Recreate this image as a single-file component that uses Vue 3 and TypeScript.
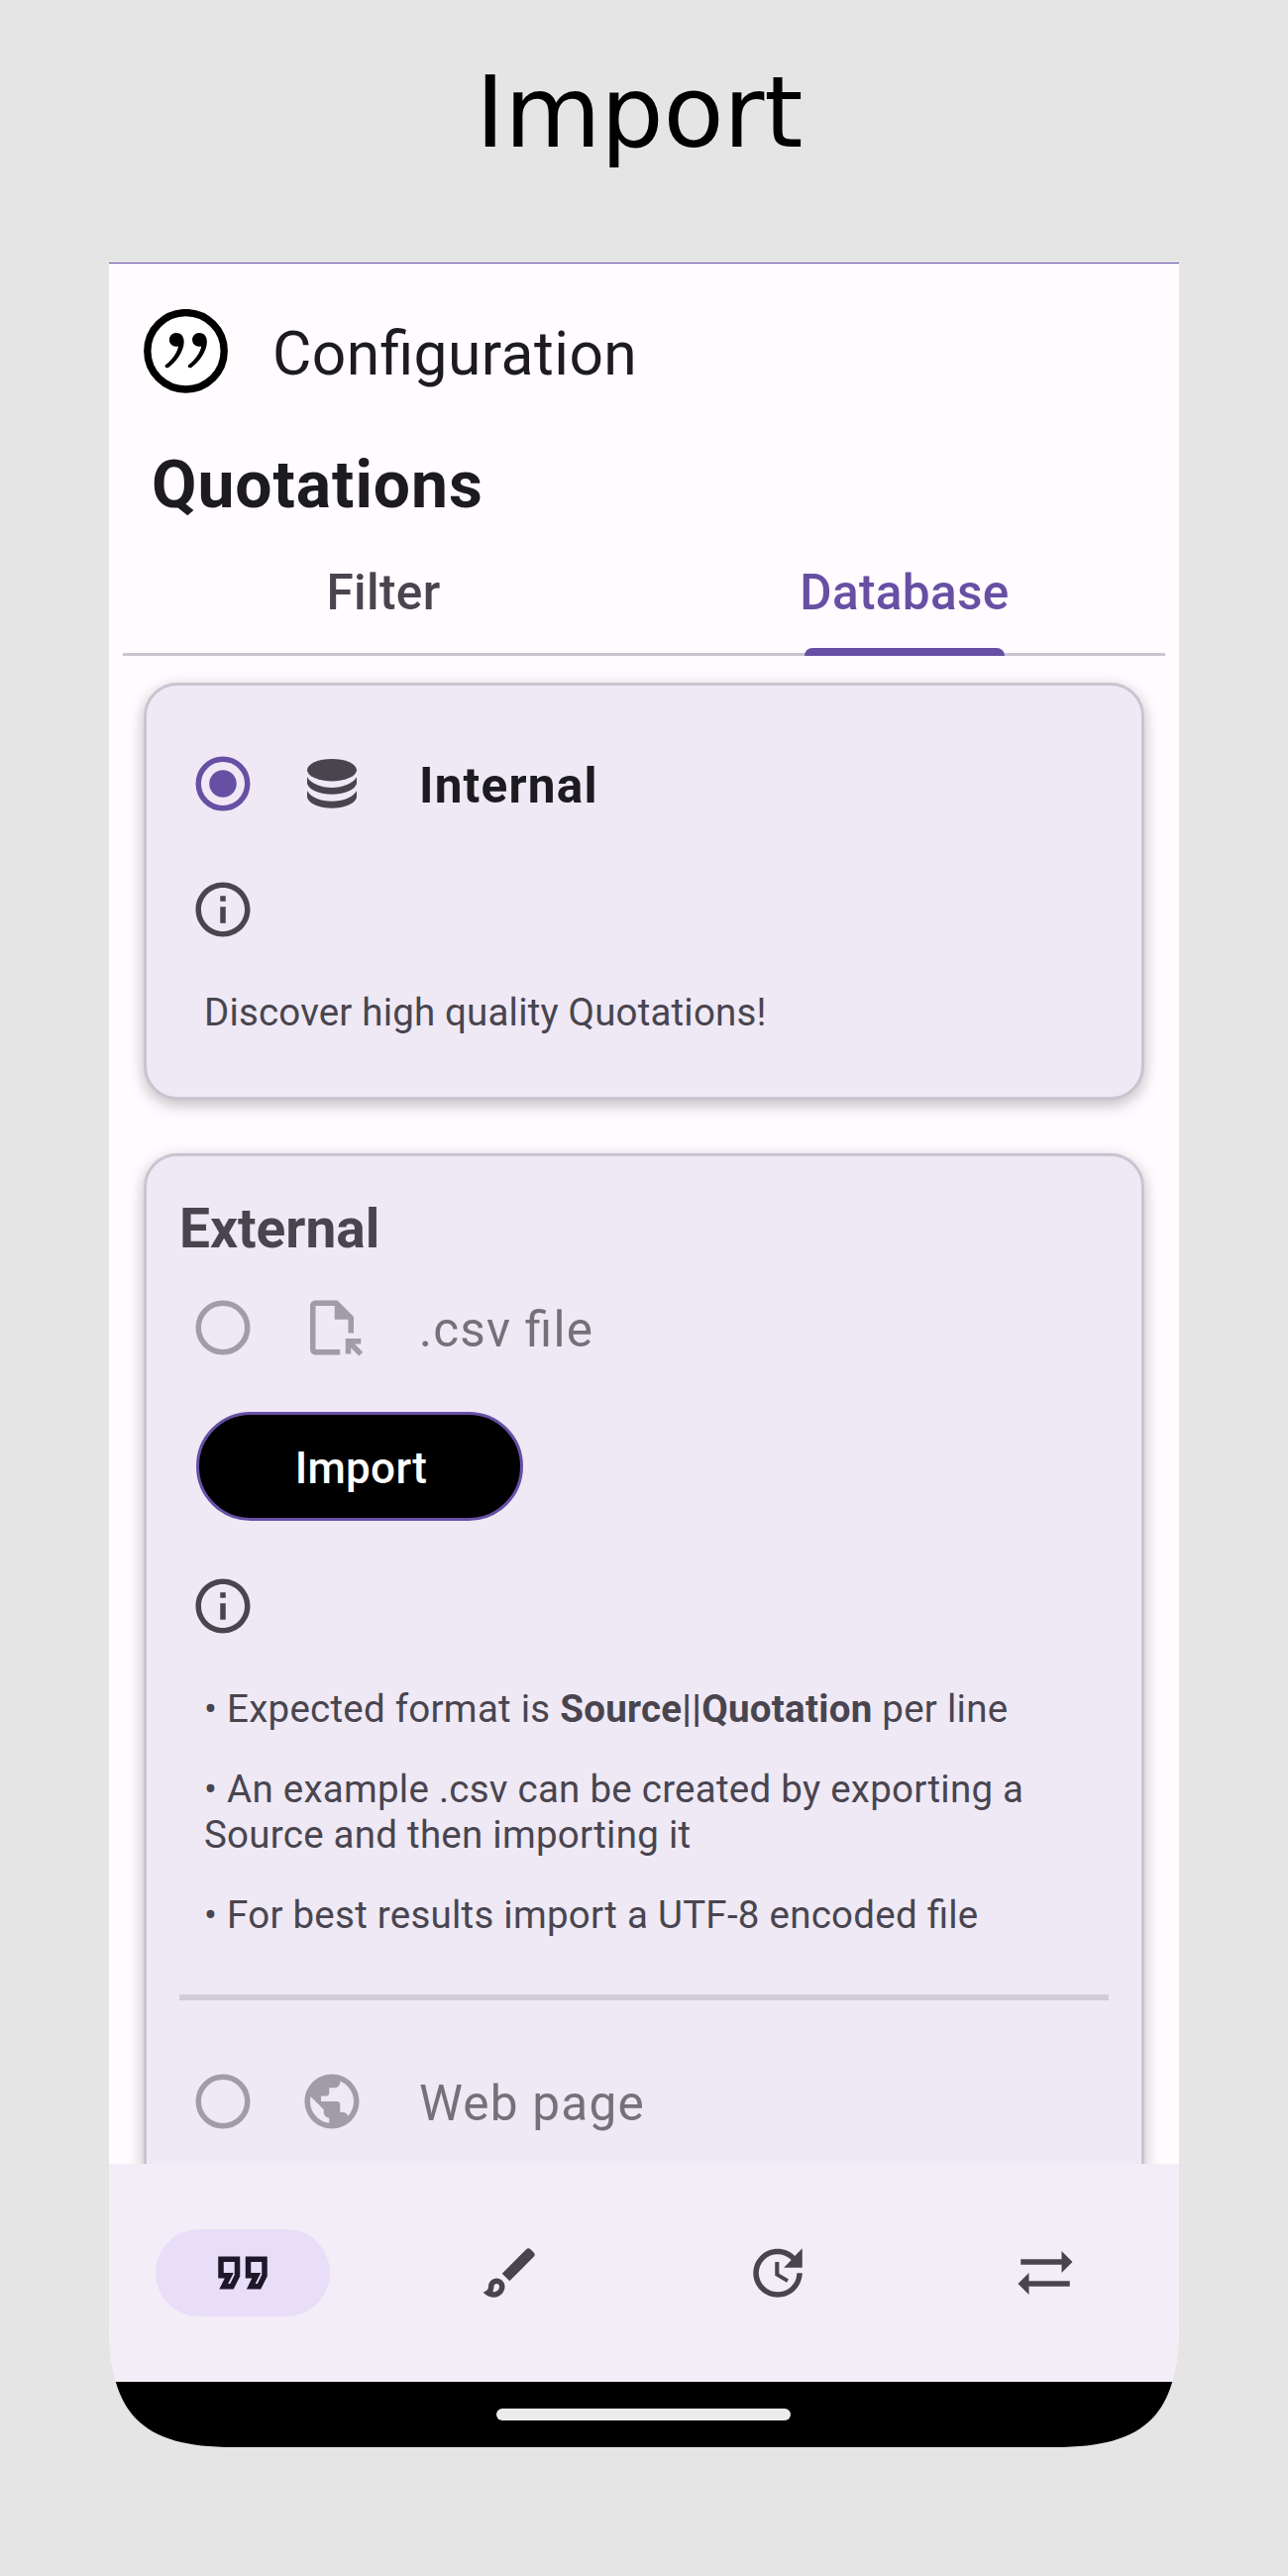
<script setup lang="ts">
interface NavItem {
  name: string
  active: boolean
  path: string
}

const infoPath =
  'M11 7h2v2h-2zm0 4h2v6h-2zm1-9C6.48 2 2 6.48 2 12s4.48 10 10 10 10-4.48 10-10S17.52 2 12 2zm0 18c-4.41 0-8-3.59-8-8s3.59-8 8-8 8 3.59 8 8-3.59 8-8 8z'

const filePath =
  'M15 22H6c-1.1 0-2-.9-2-2V4c0-1.1.9-2 2-2h8l6 6v6h-2V9h-5V4H6v16h9v2zM19 21.66v-2.24l2.95 2.95 1.41-1.41L20.41 18h2.24v-2H17v5.66h2z'

const globePath =
  'M12 2C6.48 2 2 6.48 2 12s4.48 10 10 10 10-4.48 10-10S17.52 2 12 2zm-1 17.93c-3.95-.49-7-3.85-7-7.93 0-.62.08-1.21.21-1.79L9 15v1c0 1.1.9 2 2 2v1.93zm6.9-2.54c-.26-.81-1-1.39-1.9-1.39h-1v-3c0-.55-.45-1-1-1H8v-2h2c.55 0 1-.45 1-1V7h2c1.1 0 2-.9 2-2v-.41c2.93 1.19 5 4.06 5 7.41 0 2.08-.8 3.97-2.1 5.39z'

const navItems: NavItem[] = [
  {
    name: 'quotations',
    active: true,
    path: 'M18.62 18h-5.24l2-4H13V6h8v7.24L18.62 18zM16.62 16h.76L19 12.76V8h-4v4h3.62L16.62 16zM8.62 18H3.38l2-4H3V6h8v7.24L8.62 18zM6.62 16h.76L9 12.76V8H5v4h3.62L6.62 16z',
  },
  {
    name: 'appearance',
    active: false,
    path: 'M7 16c.55 0 1 .45 1 1 0 1.1-.9 2-2 2-.17 0-.33-.02-.5-.05.31-.55.5-1.21.5-1.95 0-.55.45-1 1-1M18.67 3c-.26 0-.51.1-.71.29L9 12.25 11.75 15l8.96-8.96c.39-.39.39-1.02 0-1.41l-1.34-1.34c-.2-.2-.45-.29-.7-.29zM7 14c-1.66 0-3 1.34-3 3 0 1.31-1.16 2-2 2 .92 1.22 2.49 2 4 2 2.21 0 4-1.79 4-4 0-1.66-1.34-3-3-3z',
  },
  {
    name: 'schedule',
    active: false,
    path: 'M21 10.12h-6.78l2.74-2.82c-2.73-2.7-7.15-2.8-9.88-.1-2.73 2.71-2.73 7.08 0 9.79s7.15 2.71 9.88 0C18.32 15.65 19 14.08 19 12.1h2c0 1.98-.88 4.55-2.64 6.29-3.51 3.48-9.21 3.48-12.72 0-3.5-3.47-3.53-9.11-.02-12.58s9.14-3.47 12.65 0L21 3v7.12zM12.5 8v4.25l3.5 2.08-.72 1.21L11 13V8h1.5z',
  },
  {
    name: 'sync',
    active: false,
    path: 'M22 8l-4-4v3H3v2h15v3l4-4zM2 16l4 4v-3h15v-2H6v-3l-4 4z',
  },
]
</script>

<template>
  <div class="page">
    <h1 class="page-title">Import</h1>
    <div class="phone">
      <main class="content">
        <header class="app-bar">
          <svg class="logo" viewBox="0 0 85 85">
            <circle cx="42.5" cy="42.3" r="38.7" fill="#fff" stroke="#000" stroke-width="7.4" />
            <g v-for="dx in [0, 23.2]" :key="dx" :transform="`translate(${dx} 0)`">
              <path d="M33 24C38.3 24 40.7 28 40.7 33C40.7 43 32 54 25 59C22.5 60.2 20.6 58 22 56.2C28.5 51.5 34 44 35 37.4A6.9 6.9 0 1 1 33 24Z" />
            </g>
          </svg>
          <span class="app-name">Configuration</span>
        </header>
        <h2 class="section">Quotations</h2>
        <nav class="tabs">
          <div class="tab">Filter</div>
          <div class="tab selected">Database<span class="indicator"></span></div>
        </nav>

        <section class="card internal">
          <div class="row">
            <svg class="icon accent" viewBox="0 0 24 24">
              <circle cx="12" cy="12" r="9" fill="none" stroke="currentColor" stroke-width="2" />
              <circle cx="12" cy="12" r="5" />
            </svg>
            <svg class="icon" viewBox="0 0 66 66">
              <ellipse cx="33" cy="19.2" rx="25" ry="11.2" />
              <path d="M8 26.3C12 33 22 37 33 37S54 33 58 26.3V33C56 39.5 45 43.7 33 43.7S10 39.5 8 33Z" />
              <path d="M8 40.3C12 47 22 50.7 33 50.7S54 47 58 40.3V47C56 53.5 45 57.8 33 57.8S10 53.5 8 47Z" />
            </svg>
            <span class="label strong">Internal</span>
          </div>
          <svg class="icon info" viewBox="0 0 24 24"><path :d="infoPath" /></svg>
          <p class="note first">Discover high quality Quotations!</p>
        </section>

        <section class="card external">
          <h3 class="card-title">External</h3>
          <div class="row muted">
            <svg class="icon" viewBox="0 0 24 24">
              <circle cx="12" cy="12" r="9" fill="none" stroke="currentColor" stroke-width="2" />
            </svg>
            <svg class="icon" viewBox="0 0 24 24"><path :d="filePath" /></svg>
            <span class="label">.csv file</span>
          </div>
          <button class="import">Import</button>
          <svg class="icon info" viewBox="0 0 24 24"><path :d="infoPath" /></svg>
          <p class="note first">• Expected format is <b>Source||Quotation</b> per line</p>
          <p class="note">• An example .csv can be created by exporting a<br />Source and then importing it</p>
          <p class="note">• For best results import a UTF-8 encoded file</p>
          <div class="divider"></div>
          <div class="row muted">
            <svg class="icon" viewBox="0 0 24 24">
              <circle cx="12" cy="12" r="9" fill="none" stroke="currentColor" stroke-width="2" />
            </svg>
            <svg class="icon" viewBox="0 0 24 24"><path :d="globePath" /></svg>
            <span class="label">Web page</span>
          </div>
        </section>
      </main>

      <nav class="bottom-nav">
        <div v-for="item in navItems" :key="item.name" class="nav-item">
          <div class="pill" :class="{ active: item.active }">
            <svg class="icon" viewBox="0 0 24 24"><path fill-rule="evenodd" :d="item.path" /></svg>
          </div>
        </div>
      </nav>
      <div class="gesture-bar"><div class="handle"></div></div>
    </div>
  </div>
</template>

<style>
body {
  margin: 0;
  background: #e5e5e5;
}
</style>

<style scoped>
.page {
  box-sizing: border-box;
  width: 1300px;
  height: 2600px;
  padding-top: 54px;
  background: #e5e5e5;
  font-family: Roboto, sans-serif;
}
.page-title {
  margin: 0 0 91px 480px;
  font: 400 100px/120px 'DejaVu Sans', sans-serif;
  letter-spacing: -0.3px;
  color: #000;
}
.phone {
  box-sizing: border-box;
  display: flex;
  flex-direction: column;
  width: 1080px;
  height: 2205px;
  margin: 0 auto;
  border-top: 1px solid #6750a4;
  background: #fffbff;
  color: #49454f;
  font-feature-settings: 'liga' 1;
  clip-path: path('M0 0H1080V2080C1080 2172 1047 2205 955 2205H125C33 2205 0 2172 0 2080Z');
}
.content {
  flex: 1;
  min-height: 0;
  overflow: hidden;
}
.app-bar {
  display: flex;
  padding: 46px 0 0 35px;
  height: 85px;
}
.logo {
  width: 85px;
  height: 85px;
}
.app-name {
  padding-top: 6px;
  margin-left: 45px;
  font-size: 60.5px;
  line-height: 79px;
  letter-spacing: 0.45px;
  color: #1c1b1f;
}
.section {
  margin: 54px 0 0 43px;
  font-size: 66px;
  font-weight: 700;
  line-height: 77px;
  letter-spacing: 0.95px;
  color: #1c1b1f;
}
.tabs {
  display: flex;
  height: 131px;
  margin: 0 14px;
  border-bottom: 3px solid #cac4d0;
}
.tab {
  position: relative;
  flex: 1;
  padding-top: 40px;
  text-align: center;
  font-size: 49.5px;
  font-weight: 500;
  line-height: 60px;
  letter-spacing: 0.35px;
}
.selected {
  color: #6750a4;
}
.indicator {
  position: absolute;
  left: 162px;
  bottom: -3px;
  width: 202px;
  height: 8px;
  border-radius: 8px 8px 0 0;
  background: #6750a4;
}
.card {
  box-sizing: border-box;
  margin: 0 35px;
  border: 3px solid #cac4d0;
  border-radius: 34px;
  background: #efe9f5;
  box-shadow: 0 5px 16px rgba(0, 0, 0, 0.26);
}
.internal {
  height: 421px;
  margin-top: 27px;
  padding-top: 66px;
}
.internal .note {
  letter-spacing: 0.17px;
}
.external {
  height: 1200px;
  margin-top: 54px;
  padding-top: 41px;
}
.row {
  display: flex;
  align-items: center;
  gap: 44px;
  height: 66px;
  padding-left: 44px;
}
.icon {
  display: block;
  flex: none;
  width: 66px;
  height: 66px;
  fill: currentColor;
}
.accent {
  color: #6750a4;
}
.info {
  margin: 61px 0 0 44px;
}
.label {
  margin-left: 11px;
  padding-top: 4px;
  font-size: 49.5px;
  line-height: 62px;
  letter-spacing: 1.2px;
}
.strong {
  font-weight: 700;
  color: #1c1b1f;
}
.muted {
  color: #a19ca7;
}
.muted .label {
  color: #757178;
}
.card-title {
  margin: 0 0 35px 33px;
  font-size: 55px;
  font-weight: 700;
  line-height: 64px;
}
.import {
  display: block;
  box-sizing: border-box;
  width: 330px;
  height: 110px;
  margin: 52px 0 0 50px;
  padding: 4px 0 0 3px;
  border: 3px solid #6750a4;
  border-radius: 55px;
  background: #000;
  color: #fff;
  font: 500 44px/100px Roboto, sans-serif;
  letter-spacing: 0.3px;
}
.external .info {
  margin-top: 53px;
}
.note {
  margin: 35px 0 0 58px;
  font-size: 38.5px;
  line-height: 46px;
  letter-spacing: 0.25px;
}
.note.first {
  margin-top: 48px;
}
.divider {
  height: 6px;
  margin: 57px 33px 69px;
  background: #d2ccd8;
}
.bottom-nav {
  display: flex;
  height: 220px;
  background: #f3edf7;
}
.nav-item {
  flex: 1;
  display: flex;
  align-items: center;
  justify-content: center;
}
.pill {
  display: flex;
  align-items: center;
  justify-content: center;
  width: 176px;
  height: 88px;
  border-radius: 44px;
}
.active {
  background: #e8def8;
  color: #1d192b;
}
.gesture-bar {
  display: flex;
  justify-content: center;
  align-items: center;
  height: 66px;
  background: #000;
}
.handle {
  width: 297px;
  height: 12px;
  margin-right: 1px;
  border-radius: 6px;
  background: #ececec;
}
</style>
